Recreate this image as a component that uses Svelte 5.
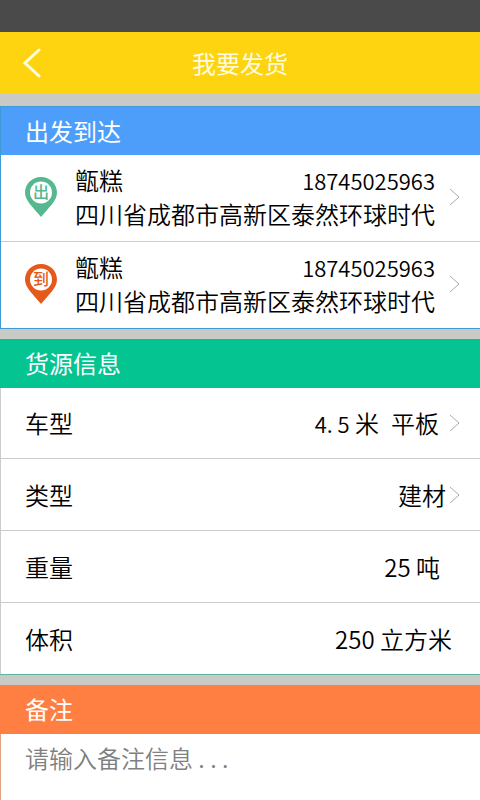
<script>
    let remark = $state("");

    const stops = [
        { kind: "from", mark: "出", name: "甑糕", phone: "18745025963", address: "四川省成都市高新区泰然环球时代" },
        { kind: "to", mark: "到", name: "甑糕", phone: "18745025963", address: "四川省成都市高新区泰然环球时代" },
    ];

    let weight = $state("25 吨");
    let volume = $state("250 立方米");
</script>

{#snippet arrow()}
    <svg class="arrow" viewBox="0 0 11 18" aria-hidden="true">
        <path d="M1 1 L10 9 L1 17" />
    </svg>
{/snippet}

<div class="page">
    <div class="status"></div>
    <header>
        <button class="back" aria-label="返回">
            <svg viewBox="0 0 18 30" aria-hidden="true"><path d="M16 2 L2 15 L16 28" /></svg>
        </button>
        <h1>我要发货</h1>
    </header>

    <main>
        <section class="route">
            <h2>出发到达</h2>
            {#each stops as stop}
                <button class="stop">
                    <svg class="pin {stop.kind}" viewBox="0 0 32 40" aria-hidden="true">
                        <path d="M16 0 C7 0 0 7 0 15.500 C0 24 8 30 16 40 C24 30 32 24 32 15.500 C32 7 25 0 16 0 Z" />
                        <circle cx="16" cy="15.500" r="11" />
                        <text x="16" y="21">{stop.mark}</text>
                    </svg>
                    <span class="contact">
                        <span class="who">
                            <span>{stop.name}</span>
                            <span class="phone">{stop.phone}</span>
                        </span>
                        <span class="address">{stop.address}</span>
                    </span>
                    {@render arrow()}
                </button>
            {/each}
        </section>

        <section class="goods">
            <h2>货源信息</h2>
            <button class="row">
                <span>车型</span>
                <span class="value spaced"><span class="num">4. 5</span> 米&ensp;平板</span>
                {@render arrow()}
            </button>
            <button class="row">
                <span>类型</span>
                <span class="value">建材</span>
                {@render arrow()}
            </button>
            <div class="row">
                <label for="weight">重量</label>
                <input id="weight" class="weight" type="text" bind:value={weight} />
            </div>
            <div class="row">
                <label for="volume">体积</label>
                <input id="volume" type="text" bind:value={volume} />
            </div>
        </section>

        <section class="remark">
            <h2><label for="remark">备注</label></h2>
            <textarea id="remark" placeholder="请输入备注信息 . . ." bind:value={remark}></textarea>
        </section>
    </main>
</div>

<style>
    :global(body) {
        margin: 0;
    }

    .page {
        display: flex;
        flex-direction: column;
        min-height: 100vh;
        background: #c9cac6;
        color: #000;
        font-family: "Noto Sans CJK SC", sans-serif;
        font-size: 24px;
        font-weight: 350;
        line-height: 34px;
    }

    button,
    input,
    textarea {
        box-sizing: border-box;
        margin: 0;
        padding: 0;
        border: 0;
        border-radius: 0;
        background: none;
        color: inherit;
        font: inherit;
        text-align: left;
    }

    button {
        cursor: pointer;
    }

    .status {
        height: 32px;
        background: #4a4a4a;
    }

    header {
        display: grid;
        grid-template-columns: 64px 1fr 64px;
        align-items: center;
        height: 62px;
        background: #fdd40f;
        color: #fffbe0;
    }

    .back {
        display: flex;
        padding-left: 23px;
    }

    .back svg {
        width: 18px;
        height: 30px;
        fill: none;
        stroke: #fffbe0;
        stroke-width: 3;
        stroke-linecap: round;
    }

    h1,
    h2 {
        margin: 0;
        font-size: 24px;
        font-weight: 400;
    }

    h1 {
        text-align: center;
    }

    main {
        display: flex;
        flex: 1;
        flex-direction: column;
        gap: 10px;
        padding-top: 12px;
    }

    section {
        background: #fff;
    }

    h2 {
        padding: 7px 25px 8px;
        color: #fff;
    }

    .route {
        border: 1px solid #3f9bd8;
        border-right: 0;
    }

    .route h2 {
        padding: 7px 24px;
        background: #4d9efb;
    }

    .stop {
        display: flex;
        align-items: center;
        width: 100%;
        padding: 8px 20px 10px 24px;
    }

    .stop + .stop {
        border-top: 1px solid #ccc;
    }

    .pin {
        flex: none;
        width: 32px;
        height: 40px;
        margin-right: 18px;
    }

    .pin circle {
        fill: #fff;
    }

    .pin text {
        font-size: 16px;
        font-weight: 500;
        text-anchor: middle;
    }

    .from {
        fill: #55b890;
    }

    .to {
        fill: #e45a1a;
    }

    .contact {
        flex: 1;
        margin-right: 14px;
    }

    .who {
        display: flex;
        justify-content: space-between;
    }

    .address {
        display: block;
        white-space: nowrap;
    }

    .phone,
    .num {
        font-size: 22px;
    }

    .arrow {
        flex: none;
        width: 11px;
        height: 18px;
        fill: none;
        stroke: #aaa;
    }

    .goods {
        border-bottom: 1px solid #5bb5a0;
    }

    .goods h2 {
        background: #04c492;
    }

    .row {
        display: flex;
        align-items: center;
        width: 100%;
        box-sizing: border-box;
        height: 70px;
        padding: 0 20px 0 24px;
        border-left: 1px solid #ccc;
    }

    .row + .row {
        height: 72px;
        border-top: 1px solid #ccc;
    }

    .value {
        flex: 1;
        margin-right: 3px;
        text-align: right;
    }

    .spaced {
        margin-right: 10px;
    }

    .row input {
        flex: 1;
        min-width: 0;
        padding-right: 8px;
        text-align: right;
    }

    .row .weight {
        padding-right: 20px;
    }

    .remark {
        display: flex;
        flex: 1;
        flex-direction: column;
    }

    .remark h2 {
        background: #ff7e42;
    }

    textarea {
        flex: 1;
        padding: 7px 24px;
        border-left: 1px solid #e0a080;
        outline: none;
        resize: none;
    }

    textarea::placeholder {
        color: #808080;
        opacity: 1;
    }
</style>
